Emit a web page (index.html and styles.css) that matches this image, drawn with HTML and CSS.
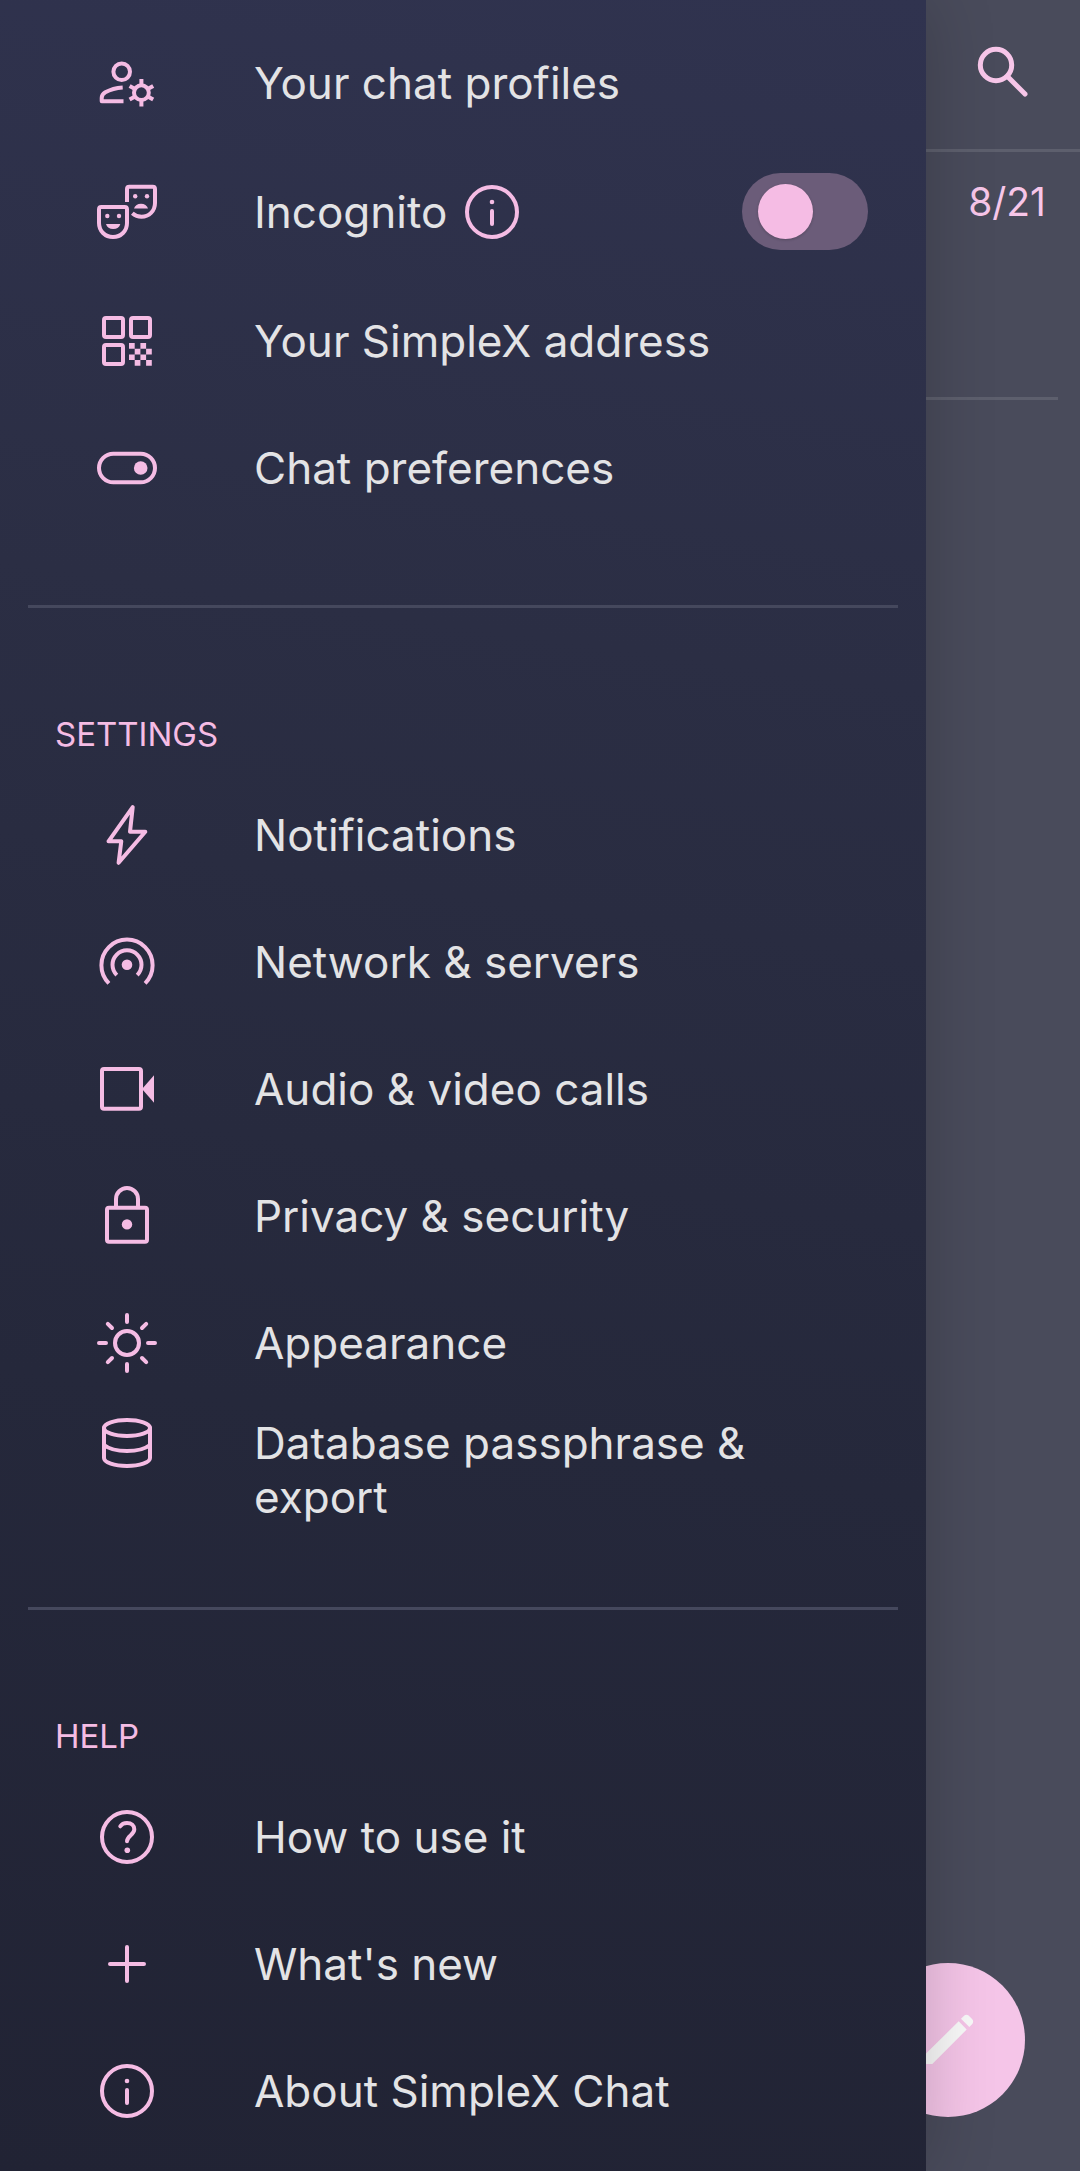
FILE: index.html
```html
<!DOCTYPE html>
<html lang="en">
<head>
<meta charset="utf-8">
<meta name="viewport" content="width=device-width, initial-scale=1">
<title>SimpleX Chat</title>
<link rel="stylesheet" href="styles.css">
</head>
<body>
<div class="screen">
  <main class="chats">
    <header class="chats-bar">
      <button class="icon-button" type="button" aria-label="Search">
        <svg class="icon" viewBox="0 0 66 66"><circle cx="27" cy="27" r="15.7"/><path d="M38.5 38.5 56 56"/></svg>
      </button>
    </header>
    <div class="chat-row"><span class="count">8/21</span></div>
    <button class="compose" type="button" aria-label="New chat">
      <svg class="icon pencil" viewBox="0 0 66 66"><path d="M43.7 14.3 51.7 22.5 17.3 57H8V49.5zM46 11.7 49.3 8.6Q51.3 7 53.6 8.6L57.3 12.3Q59 14.5 57.3 17L54.3 20z"/></svg>
    </button>
  </main>

  <nav class="drawer">
    <ul class="menu">
      <li class="row"><a class="item" href="#profiles">
        <svg class="icon" viewBox="0 0 66 66"><circle cx="27.7" cy="21.7" r="8.3"/><path class="butt" d="M28.7 37.4C22 37.8 16 39.6 11.3 42.3 9 43.7 7.7 45.5 7.7 48V51.3H29.5"/><circle cx="47.4" cy="42.7" r="7.4"/><path class="butt" d="M47.4 35.5V29M47.4 50V56.4M53.7 39 59.2 35.9M41.1 39 35.6 35.9M53.7 46.4 59.2 49.5M41.1 46.4 35.6 49.5"/></svg>
        <span class="label">Your chat profiles</span></a></li>
      <li class="row row-switch">
        <svg class="icon" viewBox="0 0 66 66"><path class="butt" d="M33 23V10Q33 7.7 35.3 7.7H58.7Q61 7.7 61 10V24C61 32 55 37.7 47.5 37.7 44 37.7 41 36.6 38.3 34.2M5 30.3Q5 28 7.3 28H30.7Q33 28 33 30.3V44C33 52 27 58 19 58S5 52 5 44z"/><g class="solid"><circle cx="41.2" cy="17.3" r="2.2"/><circle cx="53" cy="17.3" r="2.2"/><path d="M40 29.4C41 26.5 43.5 24.7 47 24.7S53 26.5 54 29.4z"/><circle cx="13.3" cy="37" r="2.2"/><circle cx="25" cy="37" r="2.2"/><path d="M12 45H26.3C25.5 48.3 23 50 19.2 50S13 48.3 12 45z"/></g></svg>
        <label class="label" for="incognito">Incognito</label>
        <button class="icon-button" type="button" aria-label="About incognito">
          <svg class="icon" viewBox="0 0 66 66"><circle cx="33" cy="33" r="25"/><path d="M33 32V45"/><circle class="solid" cx="33" cy="23" r="2.3"/></svg>
        </button>
        <input class="switch" id="incognito" type="checkbox" role="switch">
      </li>
      <li class="row"><a class="item" href="#address">
        <svg class="icon" viewBox="0 0 66 66"><rect x="10" y="10" width="19" height="19" rx="2"/><rect x="37" y="10" width="19" height="19" rx="2"/><rect x="10" y="37" width="19" height="19" rx="2"/><path class="solid" d="M35 35h5.7v5.7H35zM46.4 35h5.7v5.7h-5.7zM40.7 40.7h5.7v5.7h-5.7zM52.1 40.7h5.7v5.7h-5.7zM35 46.4h5.7v5.7H35zM46.4 46.4h5.7v5.7h-5.7zM40.7 52.1h5.7v5.7h-5.7zM52.1 52.1h5.7v5.7h-5.7z"/></svg>
        <span class="label">Your SimpleX address</span></a></li>
      <li class="row"><a class="item" href="#preferences">
        <svg class="icon" viewBox="0 0 66 66"><rect x="5" y="18.7" width="56" height="28.6" rx="14.3"/><circle class="solid" cx="46.7" cy="33" r="6.8"/></svg>
        <span class="label">Chat preferences</span></a></li>
    </ul>

    <hr class="divider">
    <h2 class="title">SETTINGS</h2>
    <ul class="menu">
      <li class="row"><a class="item" href="#notifications">
        <svg class="icon" viewBox="0 0 66 66"><path d="M38.7 5.2 36 29.8H51.3L24.6 60.8 27.3 39.3H14.5z"/></svg>
        <span class="label">Notifications</span></a></li>
      <li class="row"><a class="item" href="#network">
        <svg class="icon" viewBox="0 0 66 66"><path class="butt" d="M14.9 54.3A25.6 25.6 0 1 1 51.1 54.3M22.8 46.1A14.5 14.5 0 1 1 43.2 46.1"/><circle class="solid" cx="33" cy="35.7" r="5.3"/></svg>
        <span class="label">Network &amp; servers</span></a></li>
      <li class="row"><a class="item" href="#calls">
        <svg class="icon" viewBox="0 0 66 66"><rect x="8" y="13" width="39" height="39.7" rx="2"/><path class="solid" d="M48 33 60 19.3V46.7z"/></svg>
        <span class="label">Audio &amp; video calls</span></a></li>
      <li class="row"><a class="item" href="#privacy">
        <svg class="icon" viewBox="0 0 66 66"><rect x="13" y="24.7" width="40" height="34" rx="2"/><path class="butt" d="M22 24V16a11 11 0 0 1 22 0V24"/><circle class="solid" cx="33" cy="41.4" r="5.2"/></svg>
        <span class="label">Privacy &amp; security</span></a></li>
      <li class="row"><a class="item" href="#appearance">
        <svg class="icon" viewBox="0 0 66 66"><circle cx="33" cy="33" r="12"/><path d="M33 5V12M33 54V61M5 33H12M54 33H61M13.8 13.8 18 18M52.2 13.8 48 18M13.8 52.2 18 48M52.2 52.2 48 48"/></svg>
        <span class="label">Appearance</span></a></li>
      <li class="row"><a class="item item-tall" href="#database">
        <svg class="icon" viewBox="0 0 66 66"><ellipse cx="33" cy="18" rx="23" ry="8"/><path d="M10 18V48C10 52.4 20.3 56 33 56S56 52.4 56 48V18M10 35C15 39 23 41 33 41S51 39 56 35"/></svg>
        <span class="label">Database passphrase &amp; export</span></a></li>
    </ul>

    <hr class="divider">
    <h2 class="title">HELP</h2>
    <ul class="menu">
      <li class="row"><a class="item" href="#how-to">
        <svg class="icon" viewBox="0 0 66 66"><circle cx="33" cy="33" r="25"/><path d="M26.3 22.3C27.6 20.2 30 19 33 19 37.5 19 40.3 21.6 40.3 25.3 40.3 31 33 32 33 37.3"/><circle class="solid" cx="33.3" cy="46.3" r="2.8"/></svg>
        <span class="label">How to use it</span></a></li>
      <li class="row"><a class="item" href="#whats-new">
        <svg class="icon" viewBox="0 0 66 66"><path d="M33 16V50M16 33H50"/></svg>
        <span class="label">What's new</span></a></li>
      <li class="row"><a class="item" href="#about">
        <svg class="icon" viewBox="0 0 66 66"><circle cx="33" cy="33" r="25"/><path d="M33 32V45"/><circle class="solid" cx="33" cy="23" r="2.3"/></svg>
        <span class="label">About SimpleX Chat</span></a></li>
    </ul>
  </nav>
</div>
</body>
</html>
```
FILE: styles.css
```css
:root {
  --pink: #f5bce4;
  --text: #e3e3e5;
  --line: #45485d;
}

* {
  box-sizing: border-box;
}

body {
  margin: 0;
  font-family: Inter, "Liberation Sans", sans-serif;
  font-size: 44px;
  line-height: 54px;
  color: var(--text);
  background: #494b5b;
}

/* The drawer shares the grid cell with the chat list it covers. */
.screen {
  display: grid;
  grid-template: 1fr / 1fr;
  min-height: 100vh;
  overflow: hidden;
}

.chats,
.drawer {
  grid-area: 1 / 1;
}

.chats {
  display: flex;
  flex-direction: column;
  color: #f7c6e9;
}

.chats-bar {
  display: flex;
  justify-content: flex-end;
  align-items: center;
  height: 152px;
  padding: 0 45px 8px 0;
  border-bottom: 3px solid #5d5f6d;
}

.chats-bar .icon {
  stroke: #f7c6e9;
  stroke-width: 5;
}

.chat-row {
  height: 248px;
  margin-right: 22px;
  padding: 21px 12px 0 0;
  border-bottom: 3px solid #5d5f6d;
  text-align: right;
}

.count {
  font-size: 39px;
}

.compose {
  display: flex;
  justify-content: center;
  align-items: center;
  width: 154px;
  height: 154px;
  margin: auto 55px 54px auto;
  padding: 0;
  border: 0;
  border-radius: 50%;
  background: #f5c5e8;
}

.drawer {
  margin-right: 154px;
  padding: 19px 0 16px;
  background: linear-gradient(188deg, #30334f 0%, #2b2e44 30%, #25283b 65%, #212334 100%);
  box-shadow: 0 0 66px rgba(0, 0, 0, 0.2);
}

.menu {
  margin: 0;
  padding: 0;
  list-style: none;
}

.row {
  height: 127px;
}

.item,
.row-switch {
  display: flex;
  align-items: center;
  height: 100%;
  padding: 0 58px 0 94px;
  color: inherit;
  text-decoration: none;
}

.row-switch {
  height: 131px;
}

.item-tall {
  align-items: flex-start;
  padding-top: 4px;
}

.item-tall .label {
  padding-top: 6px;
}

.label {
  margin-left: 94px;
}

.icon {
  display: block;
  flex: none;
  width: 66px;
  height: 66px;
  fill: none;
  stroke: var(--pink);
  stroke-width: 4;
  stroke-linecap: round;
  stroke-linejoin: round;
}

.icon .butt {
  stroke-linecap: butt;
}

.icon .solid {
  fill: var(--pink);
  stroke: none;
}

.compose .pencil {
  fill: #f9f9f9;
  stroke: none;
}

.icon-button {
  padding: 0;
  border: 0;
  background: none;
}

.row-switch .icon-button {
  margin-left: 12px;
}

.switch {
  appearance: none;
  width: 126px;
  height: 77px;
  margin: 0 0 0 auto;
  padding: 11px 16px;
  border-radius: 39px;
  background: #6b5c79;
}

.switch::before {
  content: "";
  display: block;
  width: 55px;
  height: 55px;
  border-radius: 50%;
  background: var(--pink);
  box-shadow: 0 1px 3px rgba(0, 0, 0, 0.2);
}

.switch:checked::before {
  margin-left: auto;
}

.divider {
  height: 3px;
  margin: 74px 28px 0;
  border: 0;
  background: var(--line);
}

.title {
  height: 163px;
  margin: 0;
  padding: 99px 55px 0;
  font-size: 33px;
  font-weight: 400;
  color: var(--pink);
}
```
